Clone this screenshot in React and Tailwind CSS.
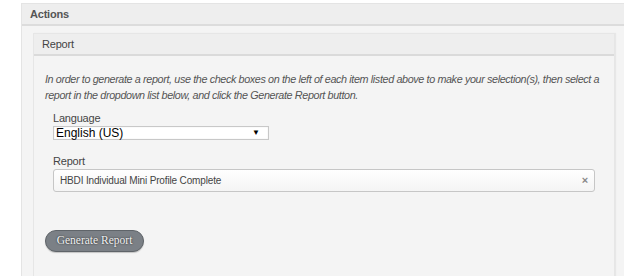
export default function App() {
  return (
    <div className="w-[624px] h-[276px] overflow-hidden bg-white pt-[3px] pl-[21px] font-['Liberation_Sans',Arial,sans-serif]">
      <div className="h-[273px] flex flex-col border-l border-t border-[#e4e4e4] bg-[#f4f4f4]">
        <div className="h-[22px] shrink-0 flex items-center px-[8px] bg-[#eeeeee] border-b-2 border-[#dcdcdc] text-[11px] font-bold text-[#555] tracking-[-0.2px]">
          Actions
        </div>
        <div className="flex-1 pt-[7px] pl-[11px] pr-[9px] flex flex-col">
          <div className="flex-1 flex flex-col border-l border-t border-r border-[#e6e6e6] shadow-[1px_0_1px_rgba(0,0,0,0.05)]">
            <div className="h-[22px] shrink-0 flex items-center px-[8px] bg-[#eeeeee] border-b-2 border-[#dadada] text-[11px] text-[#444] tracking-[-0.2px]">
              Report
            </div>
            <div className="flex-1 pt-[15px] pl-[11px] pr-[6px]">
              <p className="text-[10.8px] italic leading-[16px] text-[#555] tracking-[-0.38px]">
                In order to generate a report, use the check boxes on the left of each item listed above to make your selection(s), then select a report in the dropdown list below, and click the Generate Report button.
              </p>
              <div className="pl-[8px] pt-[8px]">
                <div className="text-[11px] leading-[14px] text-[#444] tracking-[-0.2px]">Language</div>
                <div className="mt-[1px] w-[216px] h-[14px] flex items-center justify-between bg-white border border-[#c8c8c8] shadow-[inset_0_0_1px_rgba(0,0,0,0.2)] pl-[2px] pr-[8px] text-[12px] text-black leading-none">
                  <span>English (US)</span>
                  <span className="text-[8px]">▼</span>
                </div>
                <div className="mt-[14px] text-[11px] leading-[14px] text-[#444] tracking-[-0.2px]">Report</div>
                <div className="mt-[1px] w-[542px] h-[23px] flex items-center justify-between rounded-[3px] border border-[#c6c6c6] bg-gradient-to-b from-white to-[#f4f4f4] pl-[6px] pr-[6px] text-[10px] text-[#444] tracking-[-0.15px]">
                  <span>HBDI Individual Mini Profile Complete</span>
                  <span className="text-[11px] font-bold text-[#888]">×</span>
                </div>
              </div>
              <button className="mt-[38px] w-[99px] h-[22px] rounded-full bg-[#7b8086] border border-[#5f6469] text-[11.5px] text-[#f2f2f2] font-['Liberation_Serif',serif] [text-shadow:0_0_2px_rgba(0,0,0,0.8)] shadow-[0_1px_1px_rgba(0,0,0,0.2)]">
                Generate Report
              </button>
            </div>
          </div>
        </div>
      </div>
    </div>
  );
}
